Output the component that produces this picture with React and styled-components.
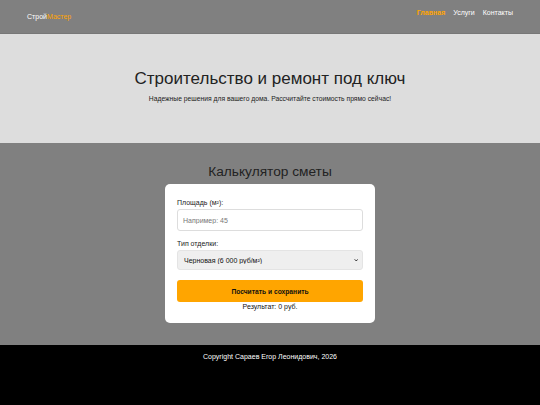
import React, { useState } from "react";
import styled, { createGlobalStyle } from "styled-components";

const GlobalStyle = createGlobalStyle`
  * { box-sizing: border-box; }
  html, body { margin: 0; padding: 0; }
  body {
    font-family: "Liberation Sans", Arial, sans-serif;
    background: #000;
  }
`;

const Page = styled.div`
  display: flex;
  flex-direction: column;
  min-height: 405px;
`;

const Header = styled.header`
  height: 34px;
  background: #808080;
  display: flex;
  justify-content: space-between;
  align-items: flex-start;
  padding: 0 27px;
  border-bottom: 1px solid #777;
`;

const Logo = styled.div`
  margin-top: 13px;
  font-size: 7px;
  color: #fff;
  span { color: #ffa500; }
`;

const Nav = styled.nav`
  display: flex;
  gap: 8px;
  margin-top: 9px;
`;

const NavLink = styled.a`
  font-size: 7px;
  color: ${(p) => (p.$active ? "#ffa500" : "#fff")};
  font-weight: ${(p) => (p.$active ? "bold" : "normal")};
  text-decoration: none;
`;

const Hero = styled.section`
  height: 109px;
  background: #ddd;
  display: flex;
  flex-direction: column;
  align-items: center;
  padding-top: 35px;
`;

const HeroTitle = styled.h1`
  margin: 0;
  font-size: 17px;
  font-weight: normal;
  color: #222;
`;

const HeroText = styled.p`
  margin: 6px 0 0;
  font-size: 6.75px;
  color: #222;
`;

const Calc = styled.section`
  background: #808080;
  height: 202px;
  display: flex;
  flex-direction: column;
  align-items: center;
  padding-top: 20px;
`;

const CalcTitle = styled.h2`
  margin: 0;
  font-size: 13.7px;
  font-weight: normal;
  color: #222;
  line-height: 18px;
`;

const Card = styled.div`
  margin-top: 3px;
  width: 210px;
  background: #fff;
  border-radius: 5px;
  padding: 15px 12px 13px;
  display: flex;
  flex-direction: column;
`;

const Label = styled.label`
  font-size: 7px;
  color: #222;
  margin-bottom: 3px;
`;

const Input = styled.input`
  height: 22px;
  border: 1px solid #ddd;
  border-radius: 3px;
  padding: 0 5px;
  font-family: inherit;
  font-size: 7px;
  color: #222;
  margin-bottom: 9px;
  outline: none;
  &::placeholder { color: #777; }
`;

const SelectBox = styled.div`
  position: relative;
  margin-bottom: 10px;
`;

const Select = styled.select`
  display: block;
  width: 100%;
  height: 20px;
  border: 1px solid #e4e4e4;
  border-radius: 3px;
  background: #efefef;
  padding: 0 6px;
  font-family: inherit;
  font-size: 7px;
  color: #111;
  appearance: none;
  outline: none;
`;

const Chevron = styled.svg`
  position: absolute;
  right: 5px;
  top: 8px;
  width: 4.5px;
  height: 4.5px;
  pointer-events: none;
`;

const Button = styled.button`
  height: 22px;
  border: none;
  border-radius: 3px;
  background: #ffa500;
  font-family: inherit;
  font-size: 6.7px;
  font-weight: bold;
  color: #111;
  cursor: pointer;
`;

const Result = styled.p`
  margin: 1px 0 0;
  font-size: 7px;
  color: #111;
  text-align: center;
`;

const Footer = styled.footer`
  flex: 1;
  background: #000;
  display: flex;
  justify-content: center;
  padding-top: 8px;
  color: #fff;
  font-size: 7px;
`;

const prices = {
  rough: 6000,
  fine: 12000,
  design: 20000,
};

export default function App() {
  const [area, setArea] = useState("");
  const [type, setType] = useState("rough");
  const [result, setResult] = useState(0);

  const calc = () => {
    const v = parseFloat(area) || 0;
    setResult(v * prices[type]);
  };

  return (
    <Page>
      <GlobalStyle />
      <Header>
        <Logo>
          Строй<span>Мастер</span>
        </Logo>
        <Nav>
          <NavLink href="#" $active>
            Главная
          </NavLink>
          <NavLink href="#">Услуги</NavLink>
          <NavLink href="#">Контакты</NavLink>
        </Nav>
      </Header>
      <Hero>
        <HeroTitle>Строительство и ремонт под ключ</HeroTitle>
        <HeroText>Надежные решения для вашего дома. Рассчитайте стоимость прямо сейчас!</HeroText>
      </Hero>
      <Calc>
        <CalcTitle>Калькулятор сметы</CalcTitle>
        <Card>
          <Label>Площадь (м²):</Label>
          <Input
            type="number"
            placeholder="Например: 45"
            value={area}
            onChange={(e) => setArea(e.target.value)}
          />
          <Label>Тип отделки:</Label>
          <SelectBox>
            <Select value={type} onChange={(e) => setType(e.target.value)}>
              <option value="rough">Черновая (6 000 руб/м²)</option>
              <option value="fine">Чистовая (12 000 руб/м²)</option>
              <option value="design">Дизайнерская (20 000 руб/м²)</option>
            </Select>
            <Chevron viewBox="0 0 10 10">
              <path d="M1.5 3 L5 6.5 L8.5 3" stroke="#222" strokeWidth="2.2" fill="none" />
            </Chevron>
          </SelectBox>
          <Button onClick={calc}>Посчитать и сохранить</Button>
          <Result>Результат: {result.toLocaleString("ru-RU")} руб.</Result>
        </Card>
      </Calc>
      <Footer>Copyright Сараев Егор Леонидович, 2026</Footer>
    </Page>
  );
}
